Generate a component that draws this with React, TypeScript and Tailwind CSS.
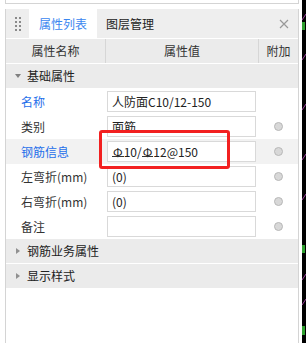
import React from "react";

const FONT = { fontFamily: '"Microsoft YaHei", "Noto Sans CJK SC", "Liberation Sans", sans-serif' };

// rebar grade symbol: phi with a bar across the bottom
function Rebar() {
  return (
    <span className="relative inline-block px-px">
      Φ
      <span className="absolute left-0 right-0 bottom-[4px] h-px bg-[#333]" />
    </span>
  );
}

const rows: { label: string; value: React.ReactNode; blue?: boolean; radio?: boolean; active?: boolean }[] = [
  { label: "名称", value: "人防面C10/12-150", blue: true },
  { label: "类别", value: "面筋", radio: true },
  {
    label: "钢筋信息",
    value: (
      <>
        <Rebar />
        10/
        <Rebar />
        12@150
      </>
    ),
    blue: true,
    radio: true,
    active: true,
  },
  { label: "左弯折(mm)", value: "(0)", radio: true },
  { label: "右弯折(mm)", value: "(0)", radio: true },
  { label: "备注", value: "", radio: true },
];

function Radio() {
  return <span className="shrink-0 w-[9px] h-[9px] rounded-full bg-[#d8d8d8] border border-[#b8b8b8]" />;
}

export default function App() {
  return (
    <div className="relative w-[306px] h-[343px] flex bg-white overflow-hidden text-[12px] text-[#333]" style={FONT}>
      <div className="ml-[5px] w-[294px] flex flex-col">
        {/* bottom of the panel above */}
        <div className="h-[4px] border-x border-b border-[#d4d4d4]" />
        <div className="h-[5px]" />

        <div className="flex-1 flex flex-col border-x border-[#d4d4d4]">
          {/* tab bar */}
          <div className="h-[29px] flex items-stretch bg-[#eeeeee]">
            <div className="w-[23px] flex items-center justify-center">
              <div className="grid grid-cols-2 gap-x-[2px] gap-y-[2px]">
                {Array.from({ length: 8 }).map((_, i) => (
                  <span key={i} className="w-[2px] h-[2px] bg-[#8a8a8a]" />
                ))}
              </div>
            </div>
            <div className="w-[68px] bg-white flex items-center justify-center text-[#3b87f0]">属性列表</div>
            <div className="w-[66px] flex items-center justify-center text-[#222]">图层管理</div>
            <div className="flex-1" />
            <div className="w-[28px] flex items-center justify-center">
              <svg width="10" height="10" viewBox="0 0 10 10">
                <path d="M1 1 L9 9 M9 1 L1 9" stroke="#999" strokeWidth="1.2" />
              </svg>
            </div>
          </div>

          {/* header */}
          <div className="mt-px h-[24px] flex bg-[#ebebeb]">
            <div className="w-[100px] flex items-center justify-center border-r border-[#d6d6d6]">属性名称</div>
            <div className="w-[153px] flex items-center justify-center border-r border-[#d6d6d6]">属性值</div>
            <div className="flex-1 flex items-center justify-center">附加</div>
          </div>

          {/* group */}
          <div className="mt-px h-[24px] flex items-center bg-[#ebebeb]">
            <span className="ml-[9px] w-0 h-0 border-x-[3px] border-x-transparent border-t-[4px] border-t-[#808080]" />
            <span className="ml-[6px] text-[#222]">基础属性</span>
          </div>

          <div className="mt-px flex flex-col">
            {rows.map((r) => (
              <div key={r.label} className={`h-[25px] flex items-start pt-[2px] ${r.active ? "bg-[#f2f2f2]" : ""}`}>
                <div className={`w-[101px] h-[21px] flex items-center pl-[15px] ${r.blue ? "text-[#1f6fea]" : "text-[#333]"}`}>
                  {r.label}
                </div>
                <div className="w-[149px] h-[21px] flex items-center pl-[4px] bg-white border border-[#d9d9d9] text-[#222]">
                  {r.value}
                </div>
                <div className="flex-1 h-[21px] flex items-center justify-center pl-[3px]">{r.radio && <Radio />}</div>
              </div>
            ))}
          </div>

          {["钢筋业务属性", "显示样式"].map((g) => (
            <div key={g} className="mb-px h-[24px] flex items-center bg-[#ebebeb]">
              <span className="ml-[10px] w-0 h-0 border-y-[3px] border-y-transparent border-l-[4px] border-l-[#909090]" />
              <span className="ml-[7px] text-[#222]">{g}</span>
            </div>
          ))}
        </div>
      </div>

      {/* drawing canvas peeking in on the right */}
      <div className="ml-[3px] flex-1 bg-black">
        <svg width="4" height="343" viewBox="0 0 4 343">
          <path d="M0 20 L4 14 M0 60 L4 54 M0 110 L4 104 M0 160 L4 154 M0 200 L4 194 M0 280 L4 274 M0 305 L4 299" stroke="#a040a0" strokeWidth="1" />
          <rect x="0" y="22" width="3" height="8" fill="#2fa02f" />
          <rect x="0" y="245" width="3" height="8" fill="#2fa02f" />
          <rect x="0" y="326" width="3" height="9" fill="#2fa02f" />
        </svg>
      </div>

      {/* red annotation box */}
      <div className="absolute left-[99px] top-[130px] w-[131px] h-[39px] border-[3px] border-[#f22020] rounded-[3px]" />
    </div>
  );
}
